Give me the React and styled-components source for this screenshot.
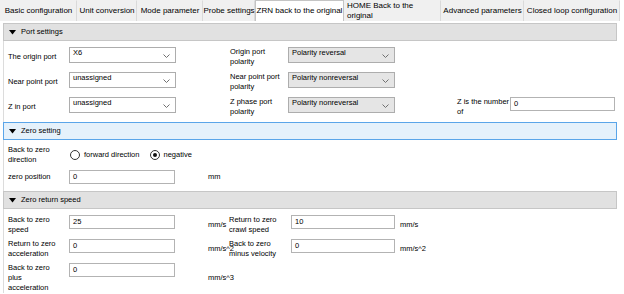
import React from "react";
import styled, { createGlobalStyle } from "styled-components";

const GlobalStyle = createGlobalStyle`
  html, body { margin: 0; padding: 0; background: #ffffff; }
  body {
    font-family: "Liberation Sans", Arial, sans-serif;
    font-size: 7.5px;
    color: #000;
  }
  #root { width: 624px; height: 294px; overflow: hidden; }
`;

const TabBar = styled.div`
  display: flex;
  height: 21px;
`;

const Tab = styled.div`
  box-sizing: border-box;
  width: ${(p) => p.$w}px;
  height: 21px;
  flex: none;
  display: flex;
  align-items: ${(p) => (p.$top ? "flex-start" : "center")};
  justify-content: ${(p) => (p.$top ? "flex-start" : "center")};
  padding: ${(p) => (p.$top ? "0 0 0 2px" : "0")};
  font-size: 8px;
  line-height: 10px;
  white-space: ${(p) => (p.$top ? "normal" : "nowrap")};
  background: ${(p) => (p.$active ? "#ffffff" : "#f0f0f0")};
  border: 1px solid ${(p) => (p.$active ? "#c4c4c4" : "#f0f0f0")};
  border-bottom: none;
  border-right: 1px solid ${(p) => (p.$active ? "#c4c4c4" : "#dadada")};
  color: #000;
`;

const Content = styled.div`
  width: 614px;
  margin: 2px 0 0 3px;
`;

const Header = styled.div`
  box-sizing: border-box;
  height: 18px;
  display: flex;
  align-items: center;
  padding-left: 5px;
  background: ${(p) => (p.$focus ? "#e5f1fb" : "#e1e1e1")};
  border: 1px solid ${(p) => (p.$focus ? "#5aa5e9" : "#c6c6c6")};
  line-height: 10px;
`;

const Arrow = styled.svg`
  width: 7px;
  height: 5px;
  margin-right: 5px;
  flex: none;
`;

const Body = styled.div`
  border-left: 1px solid #dcdcdc;
  padding: ${(p) => p.$pt}px 0 ${(p) => p.$pb}px 4px;
  display: grid;
  grid-template-columns: ${(p) => p.$cols};
  row-gap: ${(p) => p.$gap}px;
  align-items: center;
`;

const Label = styled.div`
  line-height: 10px;
  white-space: nowrap;
`;

const Unit = styled.div`
  padding-left: ${(p) => p.$pl}px;
  line-height: 10px;
  white-space: nowrap;
`;

const Select = styled.div`
  box-sizing: border-box;
  align-self: start;
  height: 16px;
  display: flex;
  align-items: flex-start;
  justify-content: space-between;
  padding: 0 5px 0 3px;
  background: ${(p) => (p.$plain ? "#ffffff" : "#e5e5e5")};
  border: 1px solid #adadad;
  line-height: 10px;
  white-space: nowrap;
`;

const Chevron = styled.svg`
  width: 7px;
  height: 4px;
  margin-top: 6px;
  flex: none;
`;

const Input = styled.div`
  box-sizing: border-box;
  align-self: start;
  height: 14px;
  display: flex;
  align-items: center;
  padding: 0 3px;
  background: #ffffff;
  border: 1px solid #b3b3b3;
  line-height: 10px;
`;

const RadioGroup = styled.div`
  grid-column: 2 / -1;
  display: flex;
  padding-left: 1px;
`;

const RadioOption = styled.div`
  width: 109px;
  display: flex;
  align-items: center;
  gap: 4px;
  line-height: 10px;
`;

const RadioCircle = styled.span`
  box-sizing: border-box;
  width: 10px;
  height: 10px;
  border-radius: 50%;
  border: 1px solid #333;
  background: #fff;
  display: flex;
  align-items: center;
  justify-content: center;
  &::after {
    content: "";
    width: 4px;
    height: 4px;
    border-radius: 50%;
    background: ${(p) => (p.$on ? "#111" : "transparent")};
  }
`;

const Spacer = styled.div``;

const Lines = ({ children }) => (
  <Label>
    {children.split("|").map((l, i) => (
      <React.Fragment key={i}>
        {i > 0 && <br />}
        {l}
      </React.Fragment>
    ))}
  </Label>
);

const Combo = ({ value, plain }) => (
  <Select $plain={plain}>
    <span>{value}</span>
    <Chevron viewBox="0 0 7 4">
      <polyline points="0.5,0.5 3.5,3.5 6.5,0.5" fill="none" stroke="#707070" strokeWidth="1" />
    </Chevron>
  </Select>
);

const SectionHeader = ({ title, focus }) => (
  <Header $focus={focus}>
    <Arrow viewBox="0 0 7 5">
      <polygon points="0,0 7,0 3.5,4.5" fill="#000" />
    </Arrow>
    {title}
  </Header>
);

const tabs = [
  { t: "Basic configuration", w: 77 },
  { t: "Unit conversion", w: 60 },
  { t: "Mode parameter", w: 66 },
  { t: "Probe settings", w: 52 },
  { t: "ZRN back to the original", w: 89, active: true },
  { t: "HOME Back to the original", w: 97, top: true },
  { t: "Advanced parameters", w: 83 },
  { t: "Closed loop configuration", w: 96 },
];

export default function App() {
  return (
    <>
      <GlobalStyle />
      <TabBar>
        {tabs.map((tb) => (
          <Tab key={tb.t} $w={tb.w} $active={tb.active} $top={tb.top}>
            {tb.top ? (
              <span>
                HOME Back to the
                <br />
                original
              </span>
            ) : (
              tb.t
            )}
          </Tab>
        ))}
      </TabBar>
      <Content>
        <SectionHeader title="Port settings" />
        <Body $pt={6} $pb={5} $gap={5} $cols="61px 107px 54px 58px 107px 62px 53px 105px">
          <Lines>The origin port</Lines>
          <Combo value="X6" plain />
          <Spacer />
          <Lines>Origin port|polarity</Lines>
          <Combo value="Polarity reversal" />
          <Spacer />
          <Spacer />
          <Spacer />

          <Lines>Near point port</Lines>
          <Combo value="unassigned" plain />
          <Spacer />
          <Lines>Near point port|polarity</Lines>
          <Combo value="Polarity nonreversal" />
          <Spacer />
          <Spacer />
          <Spacer />

          <Lines>Z in port</Lines>
          <Combo value="unassigned" plain />
          <Spacer />
          <Lines>Z phase port|polarity</Lines>
          <Combo value="Polarity nonreversal" />
          <Spacer />
          <Lines>Z is the number|of</Lines>
          <Input>0</Input>
        </Body>

        <SectionHeader title="Zero setting" focus />
        <Body $pt={5} $pb={7} $gap={5} $cols="61px 106px 54px">
          <Lines>Back to zero|direction</Lines>
          <RadioGroup>
            <RadioOption>
              <RadioCircle />
              forward direction
            </RadioOption>
            <RadioOption>
              <RadioCircle $on />
              negative
            </RadioOption>
          </RadioGroup>

          <Lines>zero position</Lines>
          <Input>0</Input>
          <Unit $pl={33}>mm</Unit>
        </Body>

        <SectionHeader title="Zero return speed" />
        <Body $pt={6} $pb={0} $gap={4} $cols="61px 106px 54px 62px 104px 60px">
          <Lines>Back to zero|speed</Lines>
          <Input>25</Input>
          <Unit $pl={33}>mm/s</Unit>
          <Lines>Return to zero|crawl speed</Lines>
          <Input>10</Input>
          <Unit $pl={5}>mm/s</Unit>

          <Lines>Return to zero|acceleration</Lines>
          <Input>0</Input>
          <Unit $pl={33}>mm/s^2</Unit>
          <Lines>Back to zero|minus velocity</Lines>
          <Input>0</Input>
          <Unit $pl={5}>mm/s^2</Unit>

          <Lines>Back to zero|plus|acceleration</Lines>
          <Input>0</Input>
          <Unit $pl={33}>mm/s^3</Unit>
        </Body>
      </Content>
    </>
  );
}
